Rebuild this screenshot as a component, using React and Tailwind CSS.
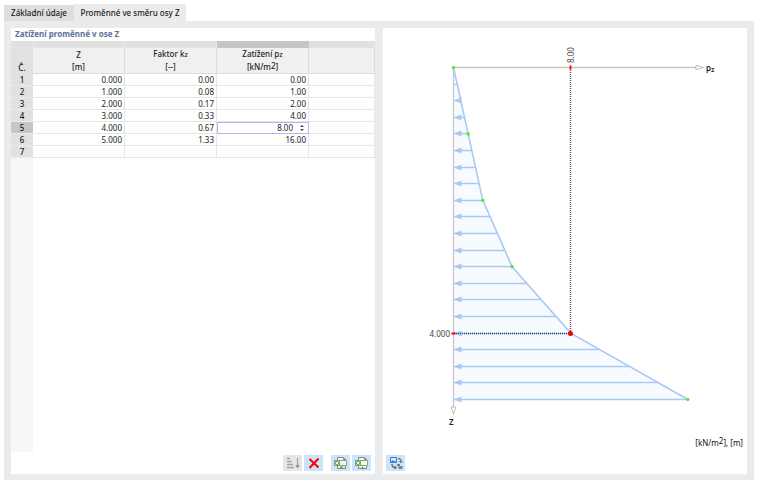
import React, { useState } from 'react';

const initialRows = [
  { z: 0, factor: '0.00', load: '0.00' },
  { z: 1, factor: '0.08', load: '1.00' },
  { z: 2, factor: '0.17', load: '2.00' },
  { z: 3, factor: '0.33', load: '4.00' },
  { z: 4, factor: '0.67', load: '8.00' },
  { z: 5, factor: '1.33', load: '16.00' },
];

const selected = 4;

// Chart origin and scale, in viewBox units
const X0 = 70.5;
const Y0 = 39.5;
const PER_KN = 14.65;
const PER_M = 66.4;

function loadAt(points, z) {
  for (let i = 1; i < points.length; i++) {
    const a = points[i - 1];
    const b = points[i];
    if (z <= b.z) {
      return a.p + ((b.p - a.p) * (z - a.z)) / (b.z - a.z);
    }
  }
  return 0;
}

function LoadChart({ rows }) {
  const points = rows.map((row) => ({ z: row.z, p: parseFloat(row.load) || 0 }));
  const px = (p) => X0 + p * PER_KN;
  const py = (z) => Y0 + z * PER_M;
  const line = points.map((pt) => `${px(pt.p)},${py(pt.z)}`).join(' ');
  const current = points[selected];
  const cx = Math.floor(px(current.p)) + 0.5;
  const cy = Math.floor(py(current.z)) + 0.5;
  const arrows = Array.from({ length: 20 }, (_, i) => (i + 1) * 0.25);

  return (
    <svg viewBox="0 0 364 427" className="block w-full font-['Noto_Sans',sans-serif] text-[8px]" role="img" aria-label="pz / Z">
      <polygon points={`${X0},${Y0} ${line} ${X0},${py(5)}`} fill="#f7fbff" />

      {/* Axes */}
      <path d={`M${X0} ${Y0}H313M${X0} ${Y0}V379`} stroke="#c6c6c8" strokeWidth="1.3" fill="none" />
      <path d="M313 37.2L320.5 39.5L313 41.8Z" fill="#fff" stroke="#b0b0b0" strokeWidth="0.8" />
      <path d="M68.2 379L70.5 386.5L72.8 379Z" fill="#fff" stroke="#b0b0b0" strokeWidth="0.8" />

      {/* Load arrows */}
      {arrows.map((z) => {
        const end = px(loadAt(points, z));
        const y = Math.floor(py(z)) + 0.5;
        return (
          <g key={z}>
            <path d={`M${X0 + 1} ${y}H${end}`} stroke="#a9c9f3" strokeWidth="1.5" />
            {end - X0 > 6 && <path d={`M${X0} ${y}L${X0 + 8} ${y - 3}V${y + 3}Z`} fill="#a9c9f3" />}
          </g>
        );
      })}
      <polyline points={line} fill="none" stroke="#a9c9f3" strokeWidth="1.6" />

      {/* Guides of the selected row */}
      <path d={`M${cx} 40V${cy}`} stroke="#555" strokeWidth="1.4" strokeDasharray="1 1" />
      <path d={`M71 ${cy}H${cx}`} stroke="#2f4a70" strokeWidth="1.4" strokeDasharray="1 1" />
      <path d={`M${cx} ${Y0 - 2}V${Y0 + 2}M${X0 - 2} ${cy}H${X0 + 2}`} stroke="#f00" strokeWidth="1.8" />

      {points.map((pt, i) =>
        i === selected ? (
          <circle key={i} cx={cx} cy={cy} r="2.5" fill="#f00000" />
        ) : (
          <circle key={i} cx={px(pt.p)} cy={py(pt.z)} r="1.6" fill="#46f000" />
        )
      )}

      <text transform={`translate(${cx + 3} 35) rotate(-90)`} fill="#444">{rows[selected].load}</text>
      <text x="67" y={cy + 3} textAnchor="end" fill="#444">{current.z.toFixed(3)}</text>
      <text x="323" y="43" fontWeight="600" fill="#222">p<tspan dy="1" fontSize="7">z</tspan></text>
      <text x="66" y="397" fontWeight="600" fill="#222">Z</text>
      <text x="360" y="418" textAnchor="end" fill="#111">[kN/m<tspan dy="-2">2</tspan><tspan dy="2">], [m]</tspan></text>
    </svg>
  );
}

function SortIcon() {
  return (
    <svg viewBox="0 0 16 14" className="h-[14px] w-4" fill="none" stroke="#a3a3a3">
      <path d="M2 2.5H5M2 5.5H6.5M2 8.5H8M2 11.5H9" strokeWidth="1.3" />
      <path d="M12.5 2V11" strokeWidth="1.2" />
      <path d="M10.3 9H14.7L12.5 12.5Z" fill="#8c8c8c" stroke="none" />
    </svg>
  );
}

function DeleteIcon() {
  return (
    <svg viewBox="0 0 16 14" className="h-[14px] w-4">
      <path d="M3.5 3L12.5 11.5M12.5 2.5L3.5 12" stroke="#f20a0a" strokeWidth="2.2" />
    </svg>
  );
}

function SheetIcon({ up }) {
  return (
    <svg viewBox="0 0 16 14" className="h-[14px] w-4" fill="none">
      <path d="M4.5 1.5H10.5L12.5 3.5V12.5H4.5Z" fill="#f4f4f4" stroke="#858585" />
      <path d="M10.5 1.5V3.5H12.5" stroke="#858585" />
      <path d="M6.500 4.5H13.5V9.5H6.5Z" fill="#f3f8f0" stroke="#8aa880" />
      <path d="M1 4H7V10H1Z" fill="#78a568" />
      <path d="M2.5 5.5L5.5 8.500M5.5 5.5L2.5 8.5" stroke="#fff" strokeWidth="0.9" />
      <path d={up ? 'M6.5 13L8.5 10.5L10.5 13Z' : 'M6.5 10.5H10.5L8.5 13Z'} fill="#5f9a4c" />
    </svg>
  );
}

function ExportIcon() {
  return (
    <svg viewBox="0 0 16 14" className="h-[14px] w-4" fill="none">
      <path d="M2.5 1.5H8.5V6.5H2.5Z" fill="#d9e8ff" stroke="#3b78e0" />
      <path d="M3 6L4.5 4L6 5.5L7 4.5L8 6Z" fill="#3b78e0" />
      <path d="M10 2.5C12.5 2.5 13 4 13 5.5" stroke="#76818c" strokeWidth="1.3" />
      <path d="M11 5H15L13 7.3Z" fill="#66717c" />
      <path d="M4 8C4 10.5 5 11.5 7 11.5" stroke="#5b6672" strokeWidth="1.3" />
      <path d="M6.5 9.5L9 11.5L6.5 13.5Z" fill="#5b6672" />
      <path d="M9 8H12V10H9ZM10.5 10H14.5V13H10.5Z" fill="#7188a5" />
    </svg>
  );
}

function ToolButton({ label, disabled, children }) {
  return (
    <button
      type="button"
      aria-label={label}
      disabled={disabled}
      className={`flex h-4 w-[19px] items-center justify-center ${disabled ? 'bg-[#e6e6e6]' : 'bg-[#cce4f7]'}`}
    >
      {children}
    </button>
  );
}

export default function App() {
  const [rows, setRows] = useState(initialRows);

  const changeLoad = (value) => {
    setRows(rows.map((row, i) => (i === selected ? { ...row, load: value } : row)));
  };

  const cell = 'border-r border-b border-[#e6e6e6] pr-[2px] text-right';

  return (
    <div className="flex min-h-screen flex-col bg-white pt-1 pr-[6px] pb-[5px] pl-1 font-['Noto_Sans',sans-serif] text-[8px] leading-3 text-[#1c1c1c]">
      {/* Tabs */}
      <div role="tablist" className="flex h-[17px] items-end font-medium">
        <button type="button" role="tab" aria-selected="false" className="h-4 w-[70px] bg-[#dedede] whitespace-nowrap">Základní údaje</button>
        <button type="button" role="tab" aria-selected="true" className="h-[17px] w-28 bg-[#ebebeb] whitespace-nowrap">Proměnné ve směru osy Z</button>
      </div>

      <div className="grid flex-1 grid-cols-2 gap-2 bg-[#ebebeb] p-[7px] pb-[6px]">
        {/* Table panel */}
        <section className="flex flex-col bg-white">
          <h2 className="h-[13px] pl-1 font-bold text-[#5d7096]">Zatížení proměnné v ose Z</h2>
          <table className="w-full table-fixed border-separate border-spacing-0">
            <colgroup>
              <col className="w-[22px]" />
              <col className="w-[92px]" />
              <col className="w-[92px]" />
              <col className="w-[92px]" />
              <col />
            </colgroup>
            <thead className="bg-[#f0f0f0] font-medium">
              <tr className="h-[7px] bg-[#e1e1e1]">
                <td></td>
                <td className="border-x border-[#ebebeb]"></td>
                <td className="border-r border-[#ebebeb]"></td>
                <td className="bg-[#c6c6c6]"></td>
                <td></td>
              </tr>
              <tr className="h-[26px]">
                <th scope="col" className="bg-[#e1e1e1] align-bottom font-medium">Č.</th>
                <th scope="col" className="border-r border-b border-[#dcdcdc] font-medium">Z<br />[m]</th>
                <th scope="col" className="border-r border-b border-[#dcdcdc] font-medium">Faktor k<span className="text-[7px]">z</span><br />[--]</th>
                <th scope="col" className="border-r border-b border-[#dcdcdc] font-medium">Zatížení p<span className="text-[7px]">z</span><br />[kN/m<span className="relative -top-px">2</span>]</th>
                <td className="border-r border-b border-[#dcdcdc]"></td>
              </tr>
            </thead>
            <tbody>
              {rows.map((row, i) => (
                <tr key={row.z} className="h-3">
                  <th scope="row" className={`border-b border-[#ebebeb] font-medium leading-[11px] ${i === selected ? 'bg-[#c6c6c6]' : 'bg-[#e1e1e1]'}`}>{i + 1}</th>
                  <td className={`${cell} leading-[11px]`}>{row.z.toFixed(3)}</td>
                  <td className={`${cell} leading-[11px]`}>{row.factor}</td>
                  {i === selected ? (
                    <td className="p-0">
                      <div className="flex h-3 items-center border border-[#b9b4ee] pr-1">
                        <input
                          type="text"
                          aria-label="Zatížení pz"
                          value={row.load}
                          onChange={(e) => changeLoad(e.target.value)}
                          className="h-[10px] min-w-0 flex-1 pr-[7px] text-right leading-[10px] outline-none"
                        />
                        <svg viewBox="0 0 4 8" className="h-2 w-1" fill="#444">
                          <path d="M0 3L2 1L4 3ZM0 5L2 7L4 5Z" />
                        </svg>
                      </div>
                    </td>
                  ) : (
                    <td className={`${cell} leading-[11px]`}>{row.load}</td>
                  )}
                  <td className={cell}></td>
                </tr>
              ))}
              <tr className="h-3">
                <th scope="row" className="border-b border-[#ebebeb] bg-[#e1e1e1] font-medium leading-[11px]">7</th>
                <td className={cell}></td>
                <td className={cell}></td>
                <td className={cell}></td>
                <td className={cell}></td>
              </tr>
            </tbody>
          </table>
          <div className="w-[22px] flex-1 bg-[#f7f7f7]"></div>
          <div className="mt-[3px] mb-[3px] flex justify-end gap-[2px] pr-1">
            <ToolButton label="Seřadit" disabled><SortIcon /></ToolButton>
            <ToolButton label="Smazat"><DeleteIcon /></ToolButton>
            <div className="ml-[6px] flex gap-[2px]">
              <ToolButton label="Export do Excelu"><SheetIcon /></ToolButton>
              <ToolButton label="Import z Excelu"><SheetIcon up /></ToolButton>
            </div>
          </div>
        </section>

        {/* Chart panel */}
        <section className="flex flex-col justify-between bg-white">
          <LoadChart rows={rows} />
          <div className="mb-[3px] pl-[3px]">
            <ToolButton label="Export grafu"><ExportIcon /></ToolButton>
          </div>
        </section>
      </div>
    </div>
  );
}
